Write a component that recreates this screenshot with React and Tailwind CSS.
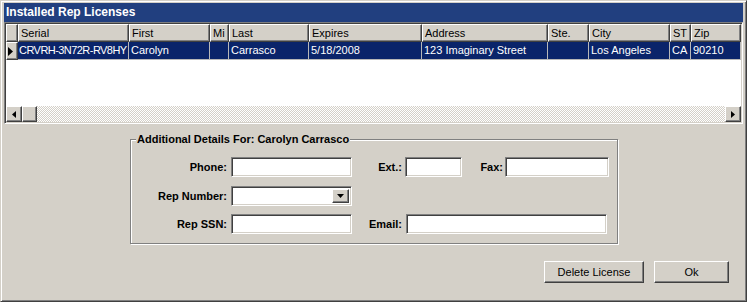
import React from 'react';

const raised =
  'border border-t-white border-l-white border-r-[#404040] border-b-[#404040] shadow-[inset_-1px_-1px_#808080]';
const sunken =
  'border border-t-[#808080] border-l-[#808080] border-r-white border-b-white shadow-[inset_1px_1px_#404040,inset_-1px_-1px_#d4d0c8] bg-white';

const columns = [
  { name: 'Serial', w: 'w-[111px]', value: 'CRVRH-3N72R-RV8HY', tight: true },
  { name: 'First', w: 'w-[81px]', value: 'Carolyn' },
  { name: 'Mi', w: 'w-[19px]', value: '' },
  { name: 'Last', w: 'w-[80px]', value: 'Carrasco' },
  { name: 'Expires', w: 'w-[113px]', value: '5/18/2008' },
  { name: 'Address', w: 'w-[126px]', value: '123 Imaginary Street' },
  { name: 'Ste.', w: 'w-[41px]', value: '' },
  { name: 'City', w: 'w-[81px]', value: 'Los Angeles' },
  { name: 'ST', w: 'w-[21px]', value: 'CA' },
  { name: 'Zip', w: 'w-[50px]', value: '90210' },
];

function Field({ className }) {
  return <div className={`h-[20px] ${sunken} ${className}`} />;
}

function Label({ className, children }) {
  return <div className={`font-bold text-right whitespace-nowrap ${className}`}>{children}</div>;
}

function ArrowButton({ dir }) {
  return (
    <div className={`w-[16px] h-[16px] flex items-center justify-center bg-[#d4d0c8] ${raised}`}>
      <svg width="4" height="7" viewBox="0 0 4 7">
        {dir === 'left' ? <polygon points="4,0 4,7 0,3.5" fill="#000" /> : <polygon points="0,0 0,7 4,3.5" fill="#000" />}
      </svg>
    </div>
  );
}

function LicenseGrid() {
  return (
    <div className="h-[102px] flex flex-col border border-t-[#808080] border-l-[#808080] border-r-white border-b-white shadow-[inset_1px_1px_#404040,inset_-1px_-1px_#d4d0c8] p-[1px] bg-white">
      {/* header row */}
      <div className="flex h-[18px] shrink-0">
        <div className={`w-[12px] bg-[#d4d0c8] ${raised}`} />
        {columns.map((c) => (
          <div key={c.name} className={`${c.w} bg-[#d4d0c8] px-[2px] flex items-center overflow-hidden whitespace-nowrap ${raised}`}>
            {c.name}
          </div>
        ))}
      </div>
      {/* selected row */}
      <div className="flex h-[18px] shrink-0">
        <div className={`w-[12px] bg-[#d4d0c8] flex items-center pl-[1px] ${raised}`}>
          <svg width="5" height="9" viewBox="0 0 5 9">
            <polygon points="0,0 5,4.5 0,9" fill="#000" />
          </svg>
        </div>
        {columns.map((c) => (
          <div
            key={c.name}
            className={`${c.w} bg-[#0a246a] text-white flex items-center overflow-hidden whitespace-nowrap border-r border-b border-[#b8b8b8] ${c.tight ? 'pl-[1px] tracking-[-0.55px]' : 'px-[2px]'}`}
          >
            {c.value}
          </div>
        ))}
      </div>
      <div className="flex-1 bg-white" />
      {/* horizontal scrollbar */}
      <div className="flex h-[16px] shrink-0">
        <ArrowButton dir="left" />
        <div className={`w-[15px] h-[16px] bg-[#d4d0c8] ${raised}`} />
        <div className="flex-1 bg-[image:conic-gradient(#fff_25%,#d4d0c8_0_50%,#fff_0_75%,#d4d0c8_0)] bg-[length:2px_2px]" />
        <ArrowButton dir="right" />
      </div>
    </div>
  );
}

export default function App() {
  return (
    <div className="w-[747px] h-[302px] bg-[#d4d0c8] text-black text-[11px] leading-[13px] font-['Liberation_Sans',Arial,sans-serif] border border-t-[#d4d0c8] border-l-[#d4d0c8] border-r-[#404040] border-b-[#404040] shadow-[inset_1px_1px_white,inset_-1px_-1px_#808080] px-[3px] pt-[2px]">
      <div className="h-[19px] bg-[#213f7f] text-white font-bold text-[12px] flex items-center pl-[2px]">
        Installed Rep Licenses
      </div>

      <LicenseGrid />

      <div className="relative mt-[15px] ml-[126px] w-[488px] h-[105px] border border-[#808080] shadow-[inset_1px_1px_white,1px_1px_white] pt-[17px]">
        <div className="absolute -top-[7px] left-[5px] bg-[#d4d0c8] px-[1px] font-bold whitespace-nowrap">
          Additional Details For: Carolyn Carrasco
        </div>

        <div className="flex items-center">
          <Label className="w-[96px]">Phone:</Label>
          <Field className="ml-[4px] w-[121px]" />
          <Label className="w-[50px]">Ext.:</Label>
          <Field className="ml-[3px] w-[57px]" />
          <Label className="w-[41px]">Fax:</Label>
          <Field className="ml-[2px] w-[104px]" />
        </div>

        <div className="flex items-center mt-[9px]">
          <Label className="w-[96px]">Rep Number:</Label>
          <div className={`ml-[4px] w-[121px] h-[20px] p-[2px] flex justify-end ${sunken}`}>
            <div className={`w-[17px] h-full bg-[#d4d0c8] flex items-center justify-center ${raised}`}>
              <svg width="7" height="4" viewBox="0 0 7 4">
                <polygon points="0,0 7,0 3.5,4" fill="#000" />
              </svg>
            </div>
          </div>
        </div>

        <div className="flex items-center mt-[8px]">
          <Label className="w-[96px]">Rep SSN:</Label>
          <Field className="ml-[4px] w-[121px]" />
          <Label className="w-[50px]">Email:</Label>
          <Field className="ml-[4px] w-[201px]" />
        </div>
      </div>

      <div className="flex justify-end gap-[10px] mt-[17px] mr-[14px]">
        <button className={`w-[100px] h-[22px] bg-[#d4d0c8] ${raised}`}>Delete License</button>
        <button className={`w-[75px] h-[22px] bg-[#d4d0c8] ${raised}`}>Ok</button>
      </div>
    </div>
  );
}
